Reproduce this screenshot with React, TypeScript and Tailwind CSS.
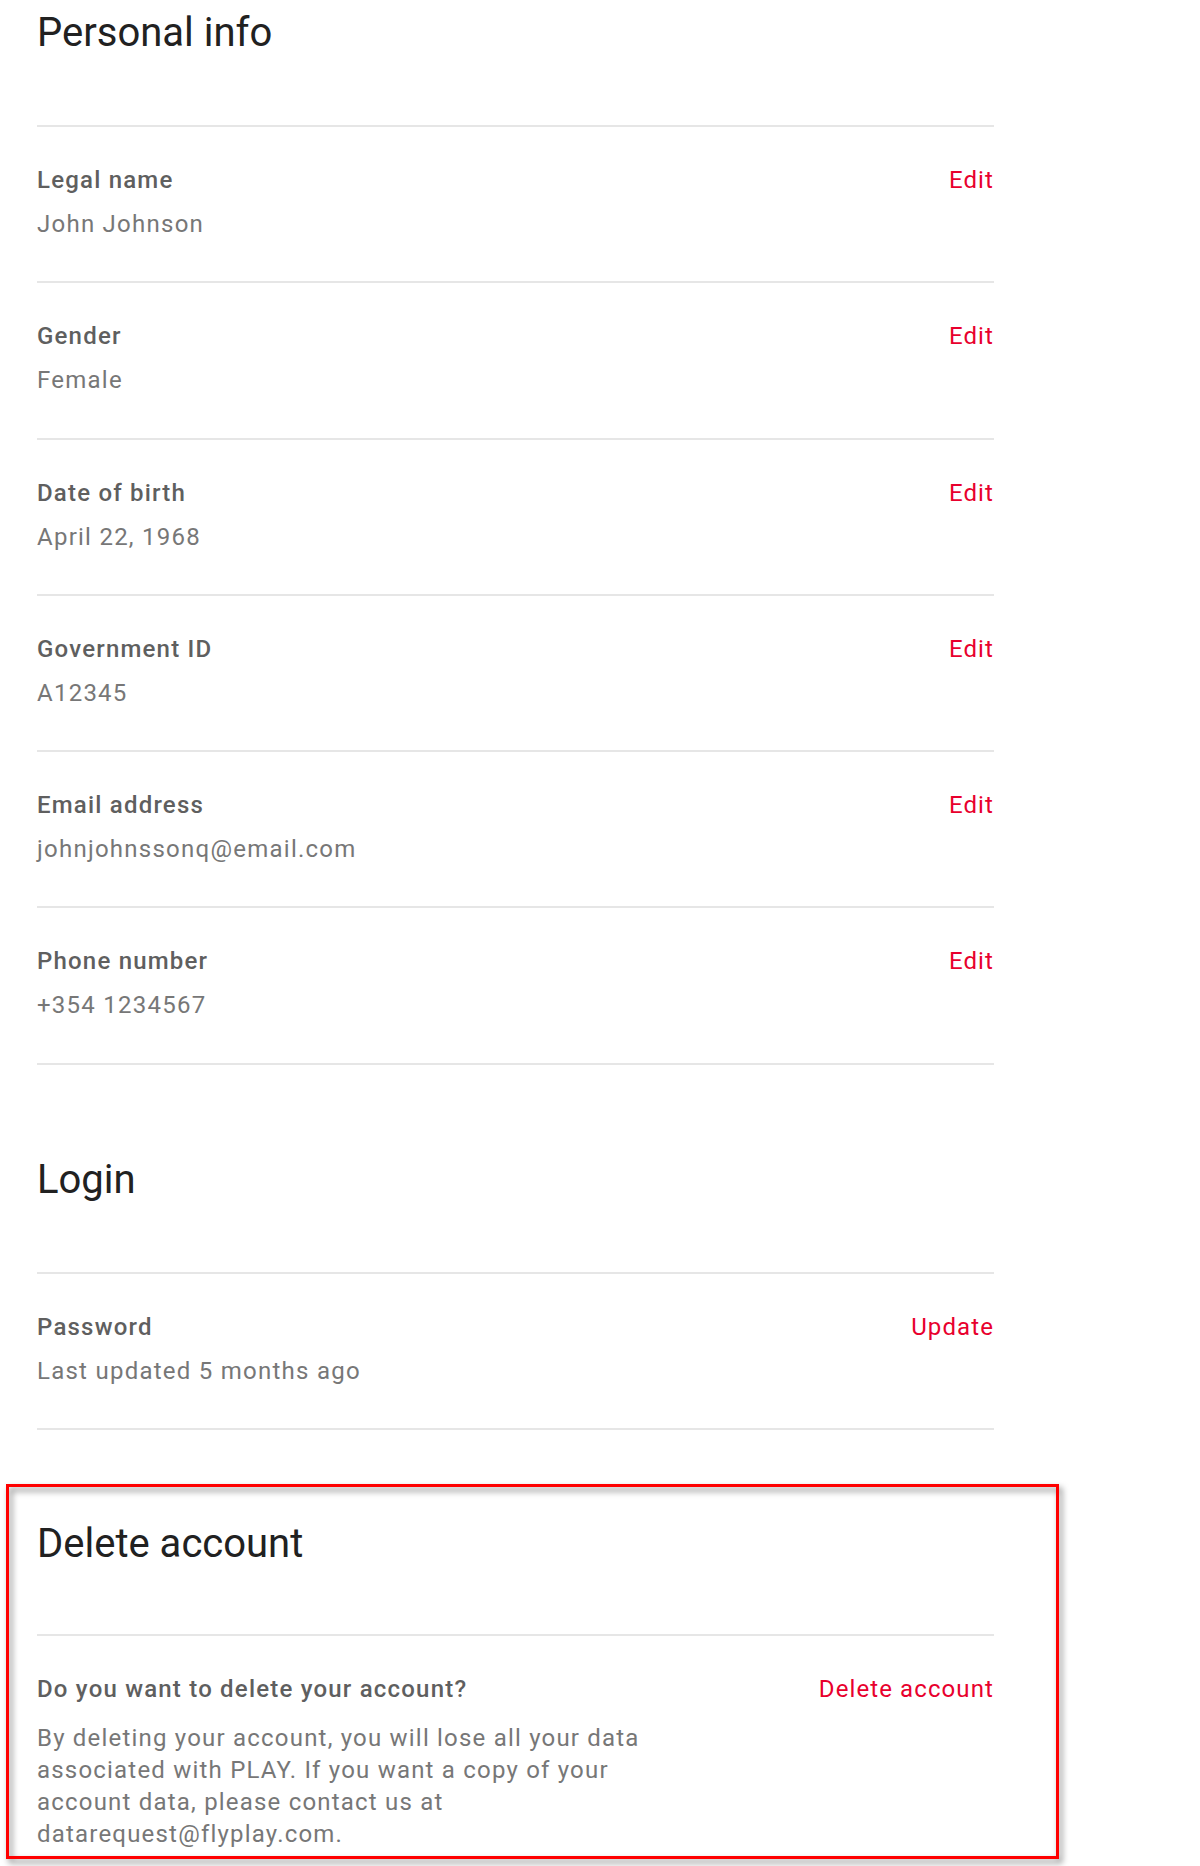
import React from "react";

const font = { fontFamily: "Roboto, 'Noto Sans', Arial, sans-serif" };

function Divider() {
  return <div className="h-[2px] w-full bg-[#e6e6e6]" />;
}

function Heading({
  children,
  mt,
  mb = "mb-[68px]",
}: {
  children: React.ReactNode;
  mt: string;
  mb?: string;
}) {
  return (
    <h2
      className={`${mt} ${mb} text-[40px] leading-[48px] font-normal text-[#212121]`}
    >
      {children}
    </h2>
  );
}

function Row({
  label,
  value,
  action,
}: {
  label: string;
  value: string;
  action: string;
}) {
  return (
    <>
      <Divider />
      <div className="flex items-start justify-between pt-[37px] pb-[41.3px]">
        <div className="flex flex-col">
          <div className="text-[24px] leading-[32px] font-medium tracking-[1.2px] text-[#5f5f5f]">
            {label}
          </div>
          <div className="mt-[12px] text-[24px] leading-[32px] tracking-[1.25px] text-[#777777]">
            {value}
          </div>
        </div>
        <button className="text-[24px] leading-[32px] tracking-[1.1px] text-[#e8002d]">
          {action}
        </button>
      </div>
    </>
  );
}

export default function App() {
  const rows = [
    ["Legal name", "John Johnson"],
    ["Gender", "Female"],
    ["Date of birth", "April 22, 1968"],
    ["Government ID", "A12345"],
    ["Email address", "johnjohnssonq@email.com"],
    ["Phone number", "+354 1234567"],
  ];
  return (
    <div className="min-h-[1866px] w-[1200px] bg-white" style={font}>
      <div className="ml-[37px] w-[957px]">
        <Heading mt="pt-[9px]">Personal info</Heading>
        {rows.map(([l, v]) => (
          <Row key={l} label={l} value={v} action="Edit" />
        ))}
        <Divider />

        <Heading mt="mt-[91px]">Login</Heading>
        <Row label="Password" value="Last updated 5 months ago" action="Update" />
        <Divider />

        <div className="relative mt-[55px] pb-[15px]">
          <div className="pointer-events-none absolute -left-[31px] -top-[1px] h-[375px] w-[1053px] border-[3px] border-[#ff0000] drop-shadow-[3px_4px_3px_rgba(0,0,0,0.5)]" />
          <Heading mt="pt-[35px]" mb="mb-[66px]">
            Delete account
          </Heading>
          <Divider />
          <div className="flex items-start justify-between pt-[37px]">
            <div className="flex flex-col">
              <div className="text-[24px] leading-[32px] font-medium tracking-[1.2px] text-[#5f5f5f]">
                Do you want to delete your account?
              </div>
              <p className="mt-[17px] w-[620px] text-[24px] leading-[32px] tracking-[1.2px] text-[#777777]">
                By deleting your account, you will lose all your data associated
                with PLAY. If you want a copy of your account data, please
                contact us at datarequest@flyplay.com.
              </p>
            </div>
            <button className="text-[24px] leading-[32px] tracking-[1.1px] text-[#e8002d]">
              Delete account
            </button>
          </div>
        </div>
      </div>
    </div>
  );
}
